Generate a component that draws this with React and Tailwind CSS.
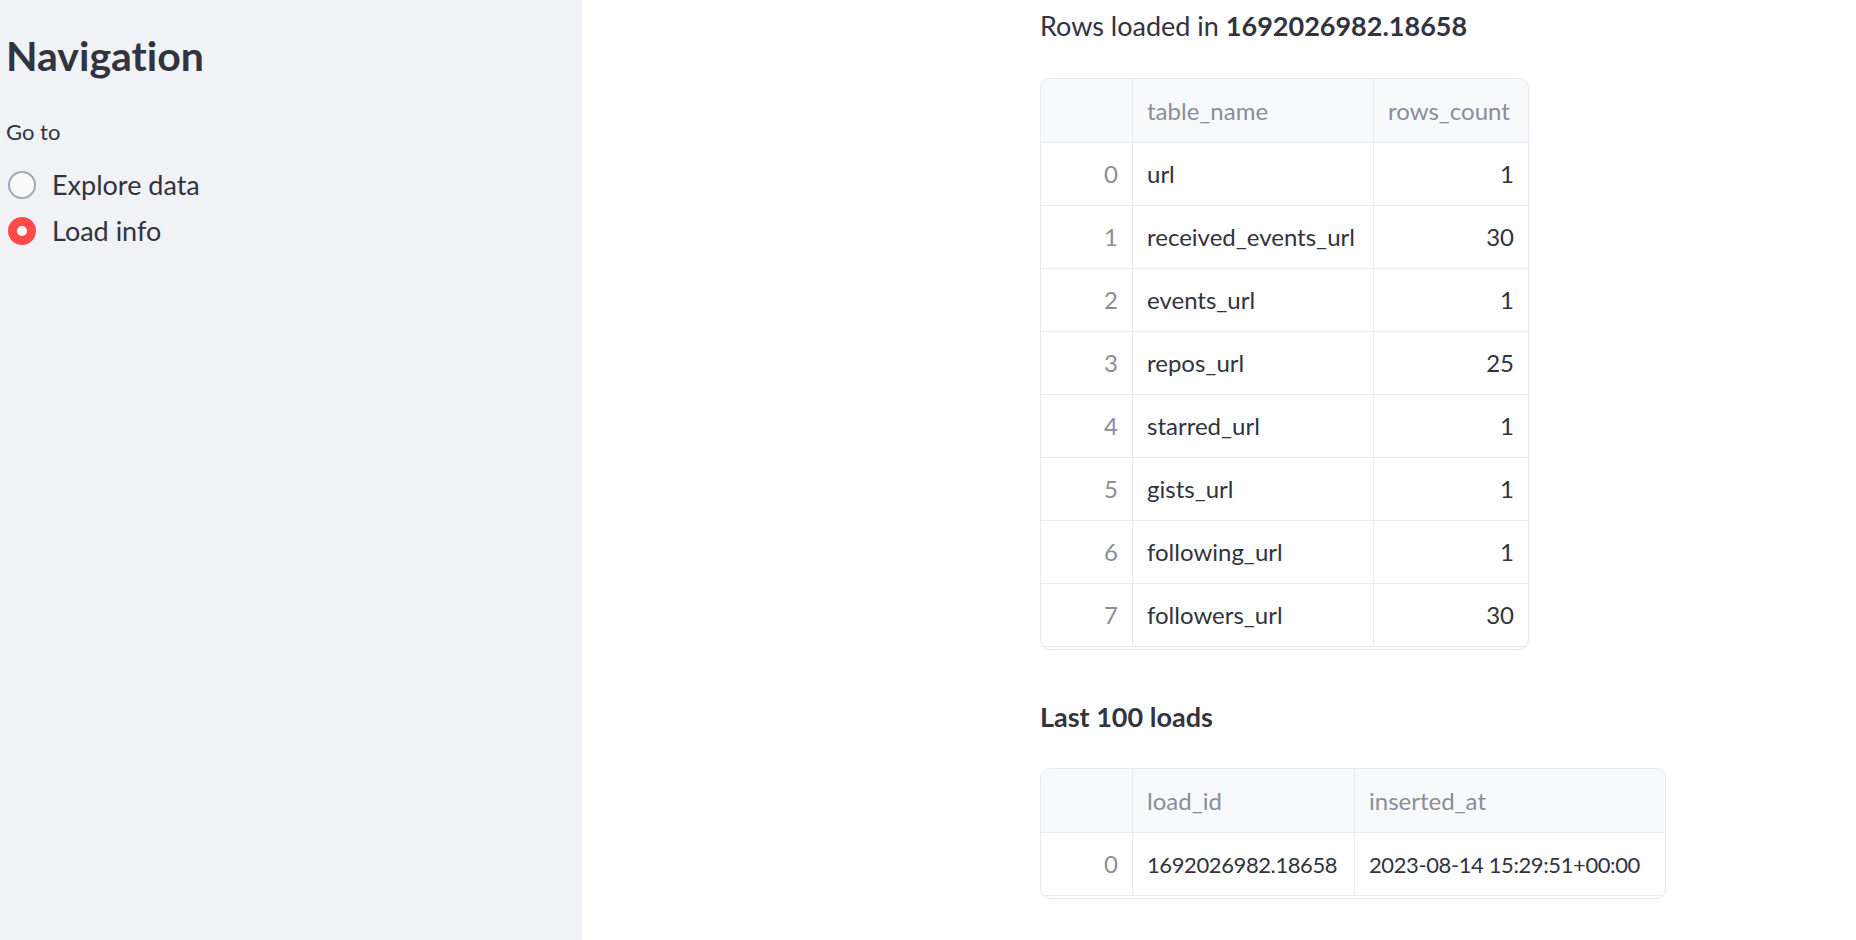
import React from 'react';

const tableRows = [
    ['0', 'url', '1'],
    ['1', 'received_events_url', '30'],
    ['2', 'events_url', '1'],
    ['3', 'repos_url', '25'],
    ['4', 'starred_url', '1'],
    ['5', 'gists_url', '1'],
    ['6', 'following_url', '1'],
    ['7', 'followers_url', '30'],
];

const Radio = ({ checked, label }) => (
    <div className="flex items-center h-[46px]">
        {checked ? (
            <span className="w-[28px] h-[28px] rounded-full bg-[#ff4b4b] flex items-center justify-center ml-[10px]">
                <span className="w-[10px] h-[10px] rounded-full bg-white" />
            </span>
        ) : (
            <span className="w-[28px] h-[28px] rounded-full border-2 border-[#a3a8b4] bg-[#fafafa] ml-[10px]" />
        )}
        <span className="ml-[16px] text-[27px] text-[#31333f]">{label}</span>
    </div>
);

// cellText lets a table with long digit strings use a tighter size
const DataTable = ({ widths, header, rows, alignLast, cellText = 'text-[24px]' }) => (
    <div className="border border-[#e6e9ef] rounded-[10px] overflow-hidden inline-block pb-[2px] bg-white">
        <div className="flex h-[64px] bg-[#f8f9fb] border-b border-[#e6e9ef]">
            {header.map((h, i) => (
                <div
                    key={i}
                    style={{ width: widths[i] }}
                    className={`flex items-center px-[14px] text-[24px] text-[#8b8d98] whitespace-nowrap ${i < header.length - 1 ? 'border-r border-[#e6e9ef]' : ''}`}
                >
                    {h}
                </div>
            ))}
        </div>
        {rows.map((row, r) => (
            <div key={r} className="flex h-[63px] border-b border-[#e6e9ef]">
                {row.map((cell, i) => (
                    <div
                        key={i}
                        style={{ width: widths[i] }}
                        className={`flex items-center px-[14px] whitespace-nowrap overflow-hidden ${i === 0 ? 'justify-end text-[#8b8d98] text-[24px]' : `text-[#31333f] ${cellText}`} ${i === row.length - 1 && alignLast ? 'justify-end' : ''} ${i < row.length - 1 ? 'border-r border-[#e6e9ef]' : ''}`}
                    >
                        {cell}
                    </div>
                ))}
            </div>
        ))}
    </div>
);

export default function App() {
    return (
        <div className="flex h-[940px] w-[1856px] overflow-hidden bg-white font-['Lato',sans-serif] text-[#31333f] [font-variant-ligatures:none]">
            <aside className="w-[582px] shrink-0 bg-[#f0f2f6] px-[6px]">
                <h1 className="text-[41px] font-bold leading-none mt-[35px] text-[#31333f]">Navigation</h1>
                <div className="text-[22px] mt-[45px] leading-none">Go to</div>
                <div className="mt-[19px] -ml-[8px]">
                    <Radio label="Explore data" />
                    <Radio checked label="Load info" />
                </div>
            </aside>
            <main className="flex-1 pl-[458px]">
                <p className="text-[27px] leading-none mt-[12px]">
                    Rows loaded in <span className="font-bold">1692026982.18658</span>
                </p>
                <div className="mt-[39px]">
                    <DataTable
                        widths={[92, 241, 154]}
                        header={['', 'table_name', 'rows_count']}
                        rows={tableRows}
                        alignLast
                    />
                </div>
                <p className="text-[27px] font-bold leading-none mt-[47px]">Last 100 loads</p>
                <div className="mt-[38px]">
                    <DataTable
                        widths={[92, 222, 310]}
                        header={['', 'load_id', 'inserted_at']}
                        rows={[['0', '1692026982.18658', '2023-08-14 15:29:51+00:00']]}
                        cellText="text-[22px] tracking-[-0.4px]"
                    />
                </div>
            </main>
        </div>
    );
}
